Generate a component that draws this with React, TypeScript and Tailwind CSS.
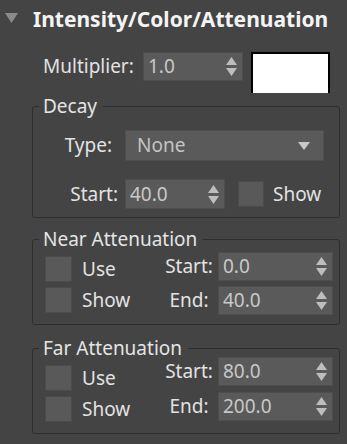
import React from "react";

const Arrows = () => (
  <svg width="11" height="19" viewBox="0 0 11 19" className="shrink-0">
    <polygon points="5.5,0 11,8 0,8" fill="#bdbdbd" />
    <polygon points="0,11 11,11 5.5,19" fill="#bdbdbd" />
  </svg>
);

const Spinner = ({ value, className }: { value: string; className: string }) => (
  <div
    className={`flex shrink-0 items-center justify-between border border-[#4e4e4e] bg-[#5a5a5a] pl-[4px] pr-[5px] ${className}`}
  >
    <span className="text-[#c8c8c8]">{value}</span>
    <Arrows />
  </div>
);

const Check = ({ className }: { className: string }) => (
  <div className={`shrink-0 border border-[#4b4b4b] bg-[#595959] ${className}`} />
);

const Legend = ({ children }: { children: React.ReactNode }) => (
  <legend className="ml-[6px] pl-[4px] pr-[6px] leading-[18px] text-[#e4e4e4]">{children}</legend>
);

const AttGroup = ({
  title,
  start,
  end,
  fieldsetClass,
  rightClass,
}: {
  title: string;
  start: string;
  end: string;
  fieldsetClass: string;
  rightClass: string;
}) => (
  <fieldset className={`ml-[32px] w-[308px] rounded-[3px] border border-[#2e2e2e] ${fieldsetClass}`}>
    <Legend>{title}</Legend>
    <div className="flex">
      <div className="ml-[12px] mt-[8px] flex w-[115px] flex-col gap-[5px]">
        <div className="flex items-center">
          <Check className="h-[26px] w-[27px]" />
          <span className="ml-[10px] leading-[26px]">Use</span>
        </div>
        <div className="flex items-center">
          <Check className="h-[26px] w-[27px]" />
          <span className="ml-[10px] leading-[26px]">Show</span>
        </div>
      </div>
      <div className={`flex flex-col ${rightClass}`}>
        <div className="flex">
          <span className="w-[58px] text-center leading-[29px]">Start:</span>
          <Spinner value={start} className="h-[29px] w-[115px] leading-[27px]" />
        </div>
        <div className="flex">
          <span className="w-[58px] text-center leading-[29px]">End:</span>
          <Spinner value={end} className="h-[29px] w-[115px] leading-[27px]" />
        </div>
      </div>
    </div>
  </fieldset>
);

export default function App() {
  return (
    <div className="flex h-[444px] w-[347px] flex-col overflow-hidden bg-[#444444] font-['Noto_Sans',sans-serif] text-[19px] text-[#e2e2e2]">
      {/* Header */}
      <div className="flex items-start pt-[5px]">
        <svg width="13" height="10" viewBox="0 0 13 10" className="ml-[5px] mt-[8px] shrink-0">
          <polygon points="0,0 13,0 6.5,10" fill="#8a8a8a" />
        </svg>
        <span className="ml-[15px] text-[21px] font-bold leading-[28px] text-[#f4f4f4]">
          Intensity/Color/Attenuation
        </span>
      </div>

      {/* Multiplier row */}
      <div className="mt-[19px] flex items-start">
        <span className="ml-[43px] w-[100px] leading-[29px]">Multiplier:</span>
        <Spinner value="1.0" className="h-[29px] w-[100px] leading-[27px]" />
        <div className="ml-[8px] h-[41px] w-[79px] border-2 border-b-0 border-black bg-white" />
      </div>

      {/* Decay */}
      <fieldset className="ml-[32px] mt-[4px] w-[308px] rounded-[3px] border border-[#2e2e2e]">
        <Legend>Decay</Legend>
        <div className="mt-[15px] flex">
          <span className="w-[92px] pr-[13px] text-right leading-[31px]">Type:</span>
          <div className="flex h-[31px] w-[199px] items-center justify-between border border-[#4e4e4e] bg-[#5a5a5a] pl-[11px] pr-[13px] leading-[29px]">
            <span className="text-[#c4c4c4]">None</span>
            <svg width="12" height="8" viewBox="0 0 12 8">
              <polygon points="0,0 12,0 6,8" fill="#c8c8c8" />
            </svg>
          </div>
        </div>
        <div className="mt-[18px] flex items-center pb-[8px]">
          <span className="w-[92px] pr-[7px] text-right leading-[30px]">Start:</span>
          <Spinner value="40.0" className="h-[30px] w-[100px] leading-[28px]" />
          <Check className="ml-[13px] h-[26px] w-[26px]" />
          <span className="ml-[9px] leading-[30px]">Show</span>
        </div>
      </fieldset>

      <AttGroup
        title="Near Attenuation"
        start="0.0"
        end="40.0"
        fieldsetClass="mt-[12px] pb-[9px]"
        rightClass="mt-[4px] gap-[5px]"
      />
      <AttGroup
        title="Far Attenuation"
        start="80.0"
        end="200.0"
        fieldsetClass="mt-[14px] pb-[11px]"
        rightClass="mt-0 gap-[6px]"
      />
    </div>
  );
}
